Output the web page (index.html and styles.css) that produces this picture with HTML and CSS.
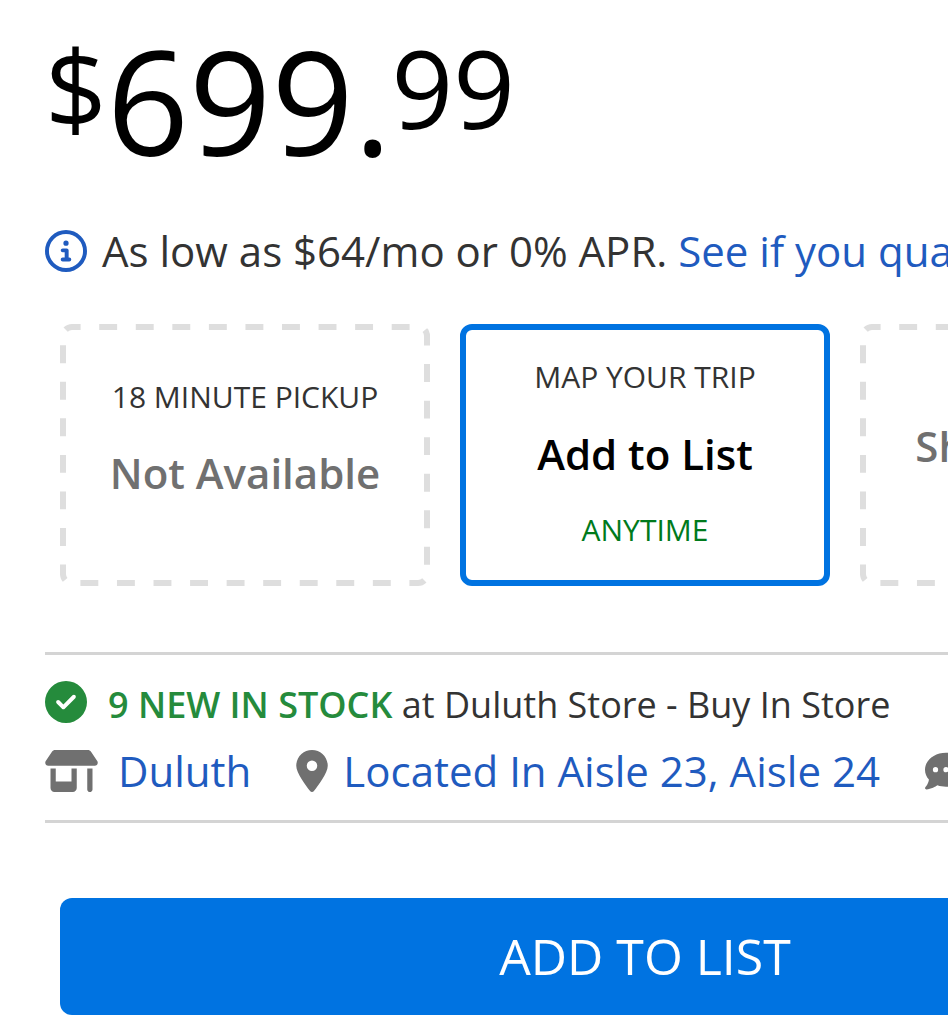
FILE: index.html
```html
<!DOCTYPE html>
<html lang="en">
<head>
<meta charset="utf-8">
<meta name="viewport" content="width=device-width, initial-scale=1">
<title>Product purchase options</title>
<link rel="stylesheet" href="styles.css">
</head>
<body>
<main class="purchase">
  <p class="price"><span class="price-small">$</span><span>699.</span><span class="price-small">99</span></p>

  <div class="finance">
    <svg class="icon icon-info" viewBox="0 0 512 512" aria-hidden="true"><path d="M464 256A208 208 0 1 0 48 256a208 208 0 1 0 416 0zM0 256a256 256 0 1 1 512 0A256 256 0 1 1 0 256zM216 336h24V272H216c-13.300 0-24-10.700-24-24s10.700-24 24-24h48c13.300 0 24 10.700 24 24v88h8c13.300 0 24 10.700 24 24s-10.700 24-24 24H216c-13.300 0-24-10.700-24-24s10.700-24 24-24zm40-208a32 32 0 1 1 0 64 32 32 0 1 1 0-64z"/></svg>
    <p class="finance-text">As low as $64/mo or 0% APR. <a href="#qualify">See if you qualify</a></p>
  </div>

  <div class="options">
    <button class="option option-pickup" type="button">
      <svg class="dashes" aria-hidden="true"><rect width="100%" height="100%" rx="12" pathLength="6800"/></svg>
      <span class="option-label">18 MINUTE PICKUP</span>
      <span class="option-title">Not Available</span>
    </button>
    <button class="option option-selected" type="button" aria-pressed="true">
      <span class="option-label">MAP YOUR TRIP</span>
      <span class="option-title">Add to List</span>
      <span class="option-label option-when">ANYTIME</span>
    </button>
    <button class="option option-ship" type="button">
      <svg class="dashes" aria-hidden="true"><rect width="100%" height="100%" rx="12" pathLength="6800"/></svg>
      <span class="option-title">Ship to Store</span>
    </button>
  </div>

  <section class="store">
    <div class="stock">
      <svg class="icon icon-check" viewBox="0 0 512 512" aria-hidden="true"><path d="M256 512A256 256 0 1 0 256 0a256 256 0 1 0 0 512zM369 209L241 337c-9.400 9.400-24.600 9.400-33.900 0l-64-64c-9.400-9.400-9.400-24.600 0-33.900s24.600-9.400 33.900 0l47 47L335 175c9.400-9.400 24.600-9.400 33.900 0s9.400 24.600 0 33.900z"/></svg>
      <p class="stock-text"><strong>9 NEW IN STOCK</strong> at Duluth Store - Buy In Store</p>
    </div>
    <div class="links">
      <a class="link link-store" href="#store">
        <svg class="icon icon-shop" viewBox="0 0 640 512" aria-hidden="true"><path d="M36.800 192H603.200c20.300 0 36.800-16.500 36.800-36.800c0-7.300-2.200-14.400-6.200-20.400L558.200 21.400C549.300 8 534.400 0 518.300 0H121.700c-16 0-31 8-39.900 21.400L6.200 134.700c-4 6.100-6.200 13.200-6.200 20.400C0 175.500 16.500 192 36.800 192zM64 224V464c0 26.500 21.500 48 48 48H336c26.500 0 48-21.500 48-48V224H320V384H128V224H64zm448 0V480c0 17.700 14.300 32 32 32s32-14.300 32-32V224H512z"/></svg>
        <span>Duluth</span>
      </a>
      <a class="link" href="#aisle">
        <svg class="icon icon-pin" viewBox="0 0 384 512" aria-hidden="true"><path d="M215.700 499.200C267 435 384 279.400 384 192C384 86 298 0 192 0S0 86 0 192c0 87.400 117 243 168.300 307.200c12.300 15.300 35.100 15.300 47.400 0zM192 128a64 64 0 1 1 0 128 64 64 0 1 1 0-128z"/></svg>
        <span>Located In Aisle 23, Aisle 24</span>
      </a>
      <a class="link" href="#chat">
        <svg class="icon" viewBox="0 0 512 512" aria-hidden="true"><path d="M256 448c141.400 0 256-93.100 256-208S397.400 32 256 32S0 125.100 0 240c0 45.100 17.700 86.800 47.700 120.900c-1.900 24.500-11.400 46.300-21.400 62.900c-5.500 9.200-11.100 16.600-15.200 21.600c-2.100 2.500-3.700 4.400-4.900 5.700l-1.600 1.700c-4.600 4.600-5.900 11.400-3.400 17.400c2.500 6 8.300 9.900 14.800 9.900c28.700 0 57.600-8.900 81.600-19.300c22.900-10 42.400-21.900 54.300-30.600c31.800 11.500 67 17.900 104.100 17.900zM128 208a32 32 0 1 1 0 64 32 32 0 1 1 0-64zm128 0a32 32 0 1 1 0 64 32 32 0 1 1 0-64zm128 0a32 32 0 1 1 0 64 32 32 0 1 1 0-64z"/></svg>
        <span>Chat</span>
      </a>
    </div>
  </section>

  <button class="add" type="button">ADD TO LIST</button>
</main>
</body>
</html>
```
FILE: styles.css
```css
* {
  box-sizing: border-box;
}

body {
  margin: 0;
  overflow-x: hidden;
  background: #fff;
  color: #333;
  font-family: "Open Sans", "Noto Sans", sans-serif;
}

p {
  margin: 0;
}

a {
  color: #1f5bbf;
  text-decoration: none;
}

button {
  font-family: inherit;
  cursor: pointer;
}

.purchase {
  min-width: 1290px;
  padding: 28px 45px 13px;
}

.price {
  display: flex;
  align-items: flex-start;
  color: #000;
  font-size: 144px;
  line-height: 144px;
}

.price-small {
  margin-top: 6px;
  font-size: 108px;
  line-height: 108px;
}

.icon {
  flex: none;
  width: 42px;
  height: 42px;
  fill: #707070;
}

.finance {
  display: flex;
  align-items: center;
  gap: 15px;
  margin-top: 47px;
}

.icon-info {
  fill: #1f5bbf;
}

.finance-text {
  font-size: 42px;
  line-height: 63px;
  white-space: nowrap;
}

.options {
  display: grid;
  grid-template-columns: repeat(3, 1fr);
  gap: 30px;
  margin: 42px 15px 0;
}

.option {
  position: relative;
  display: flex;
  flex-direction: column;
  align-items: center;
  justify-content: center;
  gap: 24px;
  min-height: 262px;
  padding: 0;
  border: 0;
  border-radius: 12px;
  background: #fff;
  color: #707070;
}

.option-pickup {
  gap: 23px;
  padding-bottom: 30px;
}

.option-ship {
  padding-bottom: 20px;
}

.option-selected {
  padding-bottom: 4px;
  border: 6px solid #0073e1;
  color: #000;
}

.option-label {
  color: #333;
  font-size: 30px;
  line-height: 42px;
}

.option-title {
  font-size: 42px;
  font-weight: 600;
  line-height: 63px;
}

.option-when {
  color: #007a1c;
}

.dashes {
  position: absolute;
  inset: 0;
  width: 100%;
  height: 100%;
  overflow: hidden;
  border-radius: 12px;
}

.dashes rect {
  fill: none;
  stroke: #dedede;
  stroke-width: 12px;
  stroke-dasharray: 98 102;
  stroke-dashoffset: 51;
}

.store {
  display: grid;
  gap: 8px;
  margin-top: 66px;
  padding: 18px 0;
  border-top: 3px solid #d4d4d4;
  border-bottom: 3px solid #d4d4d4;
}

.stock {
  display: flex;
  align-items: center;
  gap: 21px;
}

.icon-check {
  fill: #258b3c;
}

.stock-text {
  padding-top: 5px;
  font-size: 36px;
  line-height: 53px;
}

.stock-text strong {
  color: #258b3c;
  font-weight: 600;
}

.links {
  display: flex;
  gap: 45px;
}

.link {
  display: flex;
  align-items: center;
  gap: 15px;
  font-size: 42px;
  line-height: 63px;
  white-space: nowrap;
}

.link-store {
  gap: 20px;
}

.icon-shop {
  width: 53px;
}

.icon-pin {
  width: 32px;
}

.add {
  display: block;
  width: calc(100% - 30px);
  margin: 75px 15px 0;
  padding: 24px;
  border: 0;
  border-radius: 12px;
  background: #0073e1;
  color: #fff;
  font-size: 50px;
  line-height: 69px;
}
```
